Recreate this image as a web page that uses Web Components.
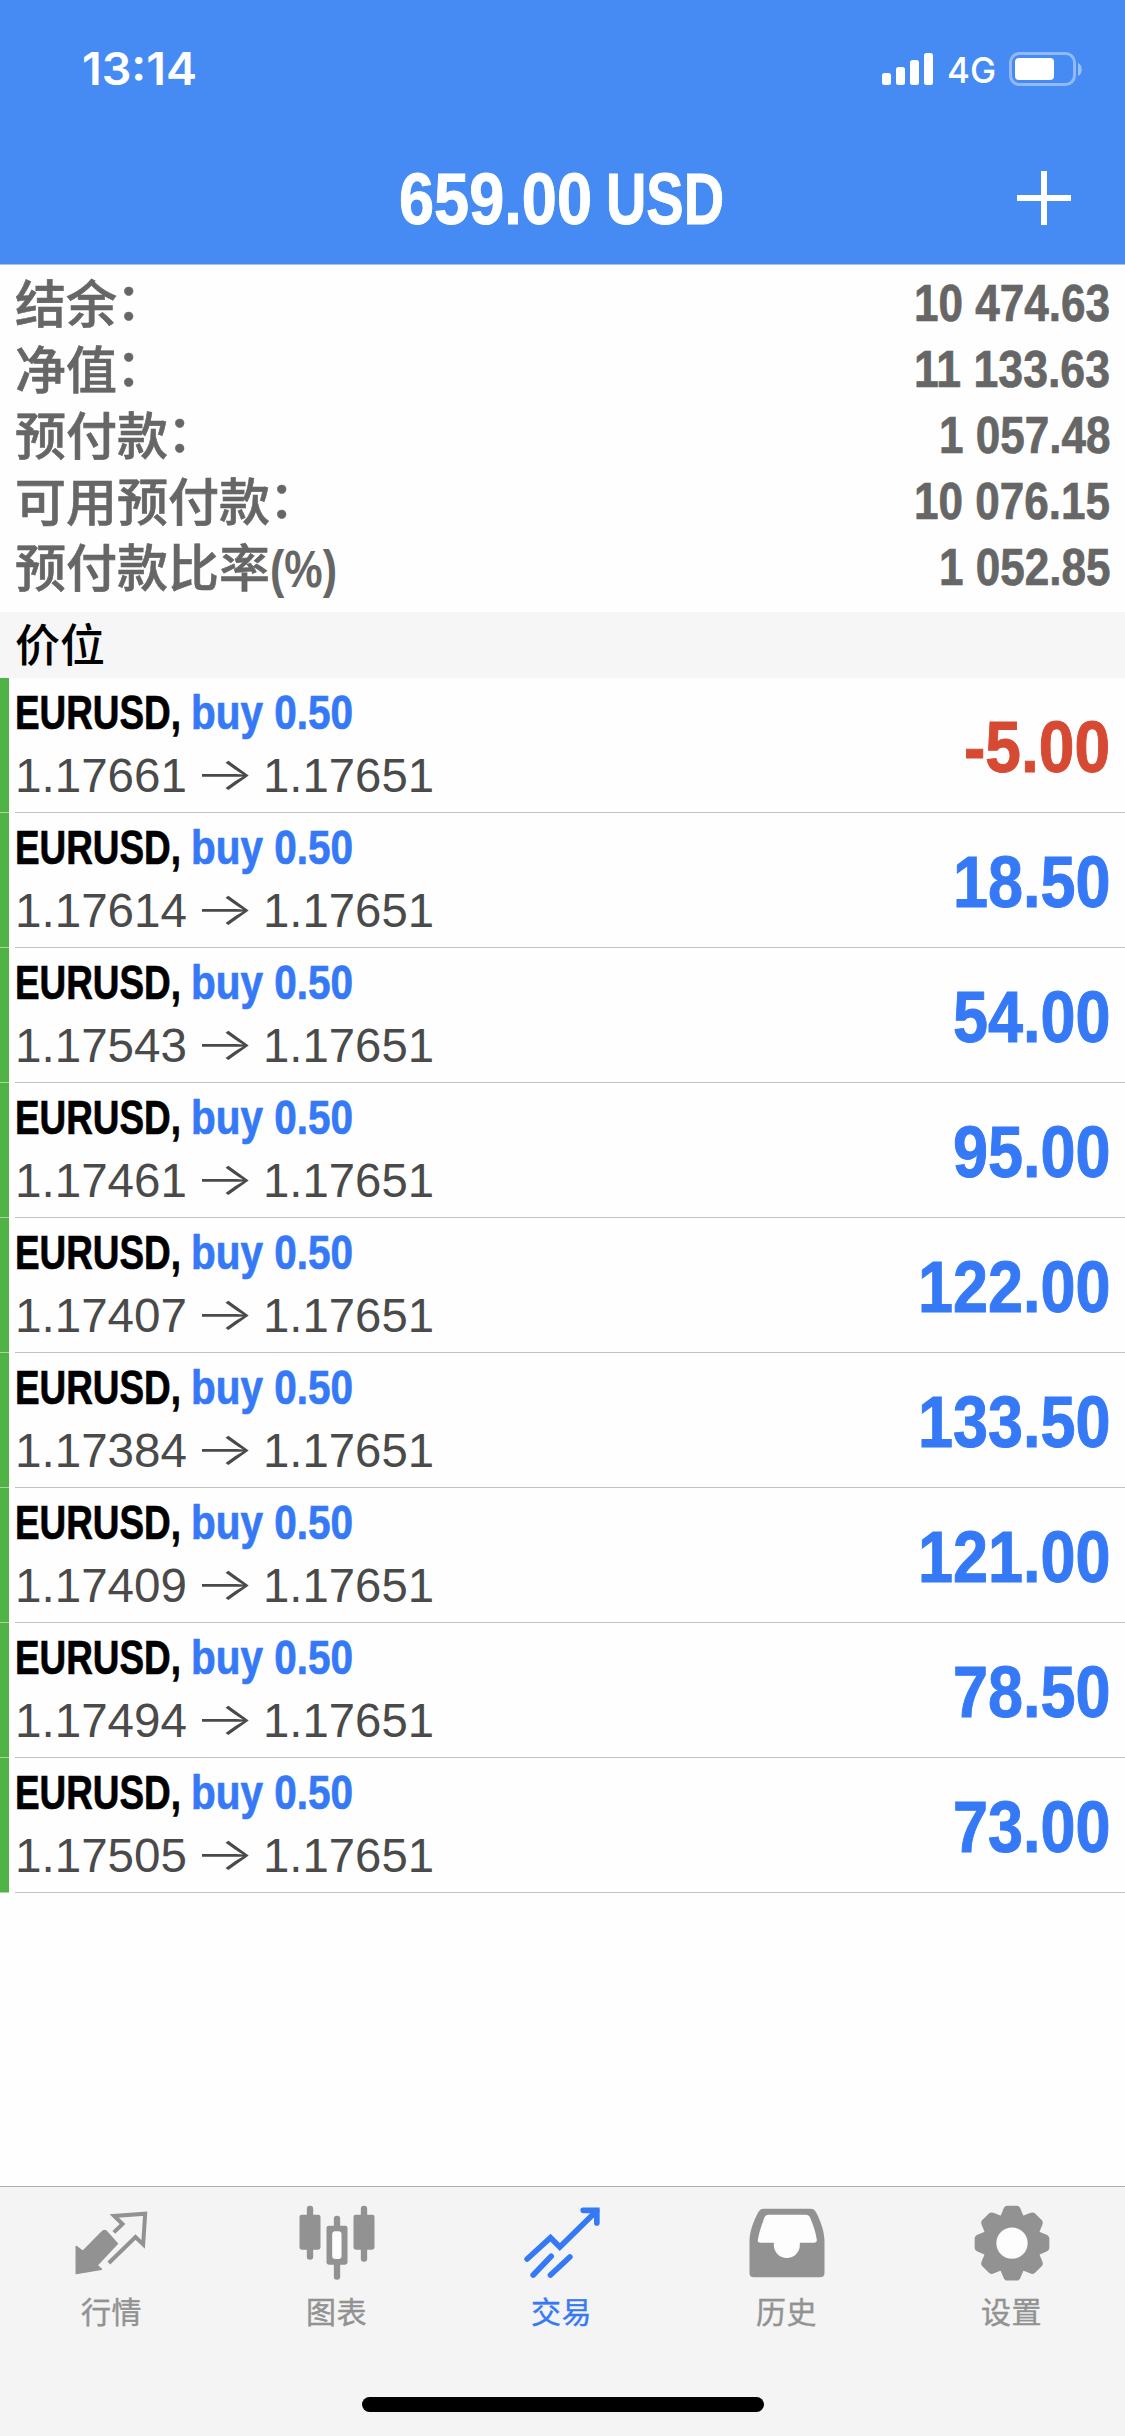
<!DOCTYPE html>
<html lang="zh-CN">
<head>
<meta charset="utf-8">
<meta name="viewport" content="width=device-width">
<title>659.00 USD</title>
<style>
  html, body { margin: 0; padding: 0; }
  body { background: #fefefe; font-family: "Liberation Sans", "Noto Sans CJK SC", sans-serif; }
</style>
</head>
<body>
<trade-app></trade-app>

<script>
const define = (name, render, after) => customElements.define(name, class extends HTMLElement {
  connectedCallback() {
    if (this.shadowRoot) return;
    this.attachShadow({ mode: 'open' }).innerHTML = render(this);
    if (after) after(this);
  }
});

/* Condensed text: the slotted text is scaled horizontally to the given width. */
define('fit-text', el => `
  <style>
    :host { display: inline-block; width: ${el.getAttribute('width')}px; white-space: nowrap; text-align: left; }
    span { display: inline-block; transform-origin: 0 50%; }
  </style><span><slot></slot></span>`,
  el => {
    const s = el.shadowRoot.querySelector('span');
    s.style.transform = `scaleX(${el.getAttribute('width') / s.getBoundingClientRect().width})`;
  });

define('status-bar', () => `
  <style>
    :host { display: flex; justify-content: space-between; align-items: center; height: 138px; padding: 0 43px 0 82px;
            box-sizing: border-box; color: #fff; font-family: Inter, sans-serif; }
    .time { font-size: 44.5px; font-weight: 600; line-height: 138px; }
    .right { display: flex; align-items: center; gap: 13px; }
    .net { font-size: 36px; font-weight: 500; line-height: 36px; padding-top: 2px; }
    svg { display: block; }
  </style>
  <fit-text class="time" width="115">13:14</fit-text>
  <div class="right">
    <svg width="52" height="34" viewBox="0 0 52 34" fill="#fff">
      <rect x="0" y="21" width="9" height="12" rx="2.5"/><rect x="14" y="15" width="9" height="18" rx="2.5"/>
      <rect x="28" y="8" width="9" height="25" rx="2.5"/><rect x="42" y="1" width="9" height="32" rx="2.5"/>
    </svg>
    <fit-text class="net" width="49">4G</fit-text>
    <svg width="73" height="34" viewBox="0 0 73 34">
      <rect x="1.5" y="1.5" width="64" height="31" rx="9" fill="none" stroke="#fff" stroke-opacity=".4" stroke-width="3"/>
      <rect x="6" y="6" width="39" height="22" rx="4" fill="#fff"/>
      <path d="M69 11c5 2 5 11 0 13z" fill="#fff" fill-opacity=".45"/>
    </svg>
  </div>`);

define('nav-header', el => `
  <style>
    :host { display: grid; grid-template-columns: 1fr auto 1fr; align-items: center; height: 126px; padding: 0 54px; color: #fff; }
    .title { grid-column: 2; display: flex; gap: 14px; font-size: 72px; font-weight: 700; line-height: 100px; padding: 0 2px 4px 0; -webkit-text-stroke: 1px #fff; }
    svg { justify-self: end; display: block; margin-top: -10px; margin-bottom: -4px; }
  </style>
  <div class="title"><fit-text width="193">${el.getAttribute('amount')}</fit-text><fit-text width="118">${el.getAttribute('currency')}</fit-text></div>
  <svg width="54" height="54" viewBox="0 0 54 54" stroke="#fff" stroke-width="6"><path d="M27 0v54M0 27h54"/></svg>`);

define('summary-row', el => `
  <style>
    :host { display: flex; justify-content: space-between; height: 66px; line-height: 66px; font-size: 51px; color: #666; }
    .l { font-weight: 500; -webkit-text-stroke: .6px #666; padding: 2px 0 0 0; height: 64px; }
    .c { vertical-align: 3px; line-height: 0; margin-left: -1px; }
    .p { font-weight: 700; -webkit-text-stroke: 0; }
    .v { font-weight: 700; -webkit-text-stroke: .7px #666; }
  </style>
  <span class="l"><slot></slot>${el.hasAttribute('unit') ? `<fit-text class="p" width="67">${el.getAttribute('unit')}</fit-text>` : '<span class="c">：</span>'}</span>
  <fit-text class="v" width="${el.getAttribute('w')}">${el.getAttribute('value')}</fit-text>`);

define('section-bar', () => `
  <style>:host { display: block; height: 66px; line-height: 70px; padding-left: 15px; background: #f6f6f6; color: #000; font-size: 45px; font-weight: 500; }</style>
  <slot></slot>`);

define('position-row', el => {
  const p = el.getAttribute('profit');
  const w = p.length === 6 ? 192.5 : 157.5;
  return `
  <style>
    :host { display: flex; height: 135px; }
    .mark { width: 9px; height: 134px; background: #4fb445; margin-right: 6px; border-bottom: 1px solid #a5d9a0; }
    .body { flex: 1; display: flex; justify-content: space-between; height: 134px; border-bottom: 1px solid #c3c3c5; padding-right: 15px; }
    .info { padding-top: 3px; font-size: 48px; line-height: 63px; }
    .info > div { display: flex; height: 63px; }
    .sym { font-weight: 700; color: #000; -webkit-text-stroke: .7px; }
    .side { font-weight: 700; color: #3579f6; -webkit-text-stroke: .7px; margin-left: 10px; }
    .px { color: #4a4a4a; }
    .arr { font-family: Inter, sans-serif; font-size: 46px; font-weight: 300; margin: -2px 8px 0 7px; }
    .profit { font-size: 72px; font-weight: 700; line-height: 138px; color: ${p[0] === '-' ? '#d64a33' : '#3579f6'}; -webkit-text-stroke: 1px; }
  </style>
  <div class="mark"></div>
  <div class="body">
    <div class="info">
      <div><fit-text class="sym" width="166">EURUSD,</fit-text><fit-text class="side" width="162">buy 0.50</fit-text></div>
      <div class="px"><fit-text width="172">${el.getAttribute('open')}</fit-text><fit-text class="arr" width="61">→</fit-text><fit-text width="171">1.17651</fit-text></div>
    </div>
    <fit-text class="profit" width="${p[0] === '-' ? 146 : w}">${p}</fit-text>
  </div>`;
});

const ICONS = {
  quotes: ['217.5', `<path stroke="currentColor" stroke-width="4" stroke-linejoin="round" d="M227 230V312L303 299 290 287 351 222 317 184Q312 180 307 184L247 245Z"/>
    <path fill="none" stroke="currentColor" stroke-width="12" d="M340 188 366 163 341 139 434 132 428 224 405 202 325 280"/>`],
  chart: ['892.5', `<rect x="897" y="135" width="63" height="105" rx="7"/><rect x="919" y="108" width="19" height="162" rx="9"/>
    <rect x="1059" y="135" width="63" height="105" rx="7"/><rect x="1081" y="108" width="19" height="168" rx="9"/>
    <rect x="1000" y="138" width="19" height="192" rx="9"/><rect x="978" y="168" width="63" height="117" rx="7"/>
    <rect x="995" y="185" width="28" height="83" rx="9" fill="#fdfdfd"/>`],
  trade: ['307.5', `<g fill="none" stroke="currentColor" stroke-width="17" stroke-linecap="round"><path d="M320 268 390 204 418 232 528 124"/>
    <path d="M488 122H529V160M338 316 392 260M390 316 448 262"/></g>`],
  history: ['982.5', `<path d="M1030 117H1170Q1182 117 1188 130C1203 160 1212 190 1212 215V310Q1212 323 1198 323H1000Q987 323 987 310V215C987 190 996 160 1012 130Q1018 117 1030 117Z"/>
    <path fill="#fdfdfd" d="M1042 135H1156Q1165 135 1169 144C1180 170 1186 190 1189 210Q1190 219 1182 219H1138V226A39 39 0 0 1 1060 226V219H1020Q1010 219 1012 210C1017 185 1022 170 1032 143Q1035 135 1042 135Z"/>`],
  settings: ['457.5', `<g transform="translate(574.5 220.5)"><circle r="47" fill="#fdfdfd"/><circle r="67.5" fill="none" stroke="currentColor" stroke-width="41"/>
    ${[0,45,90,135,180,225,270,315].map(a => `<path transform="rotate(${a})" d="M-36 -78-26 -102Q-22 -112-14 -112H14Q22 -112 26 -102L36 -78Z"/>`).join('')}</g>`]
};

define('tab-item', el => `
  <style>
    :host { display: flex; flex: 1; flex-direction: column; align-items: center; gap: 10px; padding-top: 16px; color: #929292; }
    :host([active]) { color: #3579f6; }
    svg { display: block; } span { font-size: 30px; line-height: 40px; letter-spacing: .4px; padding-right: 2px; -webkit-text-stroke: .4px; }
  </style>
  <svg width="80" height="80" viewBox="${ICONS[el.getAttribute('icon')][0]} 100 240 240" fill="currentColor">${ICONS[el.getAttribute('icon')][1]}</svg>
  <span><slot></slot></span>`);

define('tab-bar', () => `
  <style>
    :host { display: flex; flex-direction: column; height: 250px; box-sizing: border-box; background: #f4f4f4; border-top: 1px solid #adadad; }
    .tabs { display: flex; height: 210px; }
    .home { width: 402px; height: 15px; border-radius: 8px; background: #000; align-self: center; }
  </style>
  <div class="tabs"><slot></slot></div><div class="home"></div>`);

define('trade-app', () => `
  <style>
    :host { display: flex; flex-direction: column; height: 2436px; background: #fefefe; overflow: hidden; }
    header { background: #468bf4; height: 264px; border-bottom: 1px solid #a9bfe6; }
    .summary { padding: 6px 15px 11px; }
    main { flex: 1; }
  </style>
  <header><status-bar></status-bar><nav-header amount="659.00" currency="USD"></nav-header></header>
  <main>
    <div class="summary">
      <summary-row value="10 474.63" w="196">结余</summary-row>
      <summary-row value="11 133.63" w="196">净值</summary-row>
      <summary-row value="1 057.48" w="171.5">预付款</summary-row>
      <summary-row value="10 076.15" w="196">可用预付款</summary-row>
      <summary-row value="1 052.85" w="171.5" unit="(%)">预付款比率</summary-row>
    </div>
    <section-bar>价位</section-bar>
    ${[['1.17661','-5.00'],['1.17614','18.50'],['1.17543','54.00'],['1.17461','95.00'],['1.17407','122.00'],['1.17384','133.50'],['1.17409','121.00'],['1.17494','78.50'],['1.17505','73.00']]
      .map(([o, p]) => `<position-row open="${o}" profit="${p}"></position-row>`).join('')}
  </main>
  <tab-bar>
    <tab-item icon="quotes">行情</tab-item><tab-item icon="chart">图表</tab-item><tab-item icon="trade" active>交易</tab-item>
    <tab-item icon="history">历史</tab-item><tab-item icon="settings">设置</tab-item>
  </tab-bar>`);
</script>
</body>
</html>
